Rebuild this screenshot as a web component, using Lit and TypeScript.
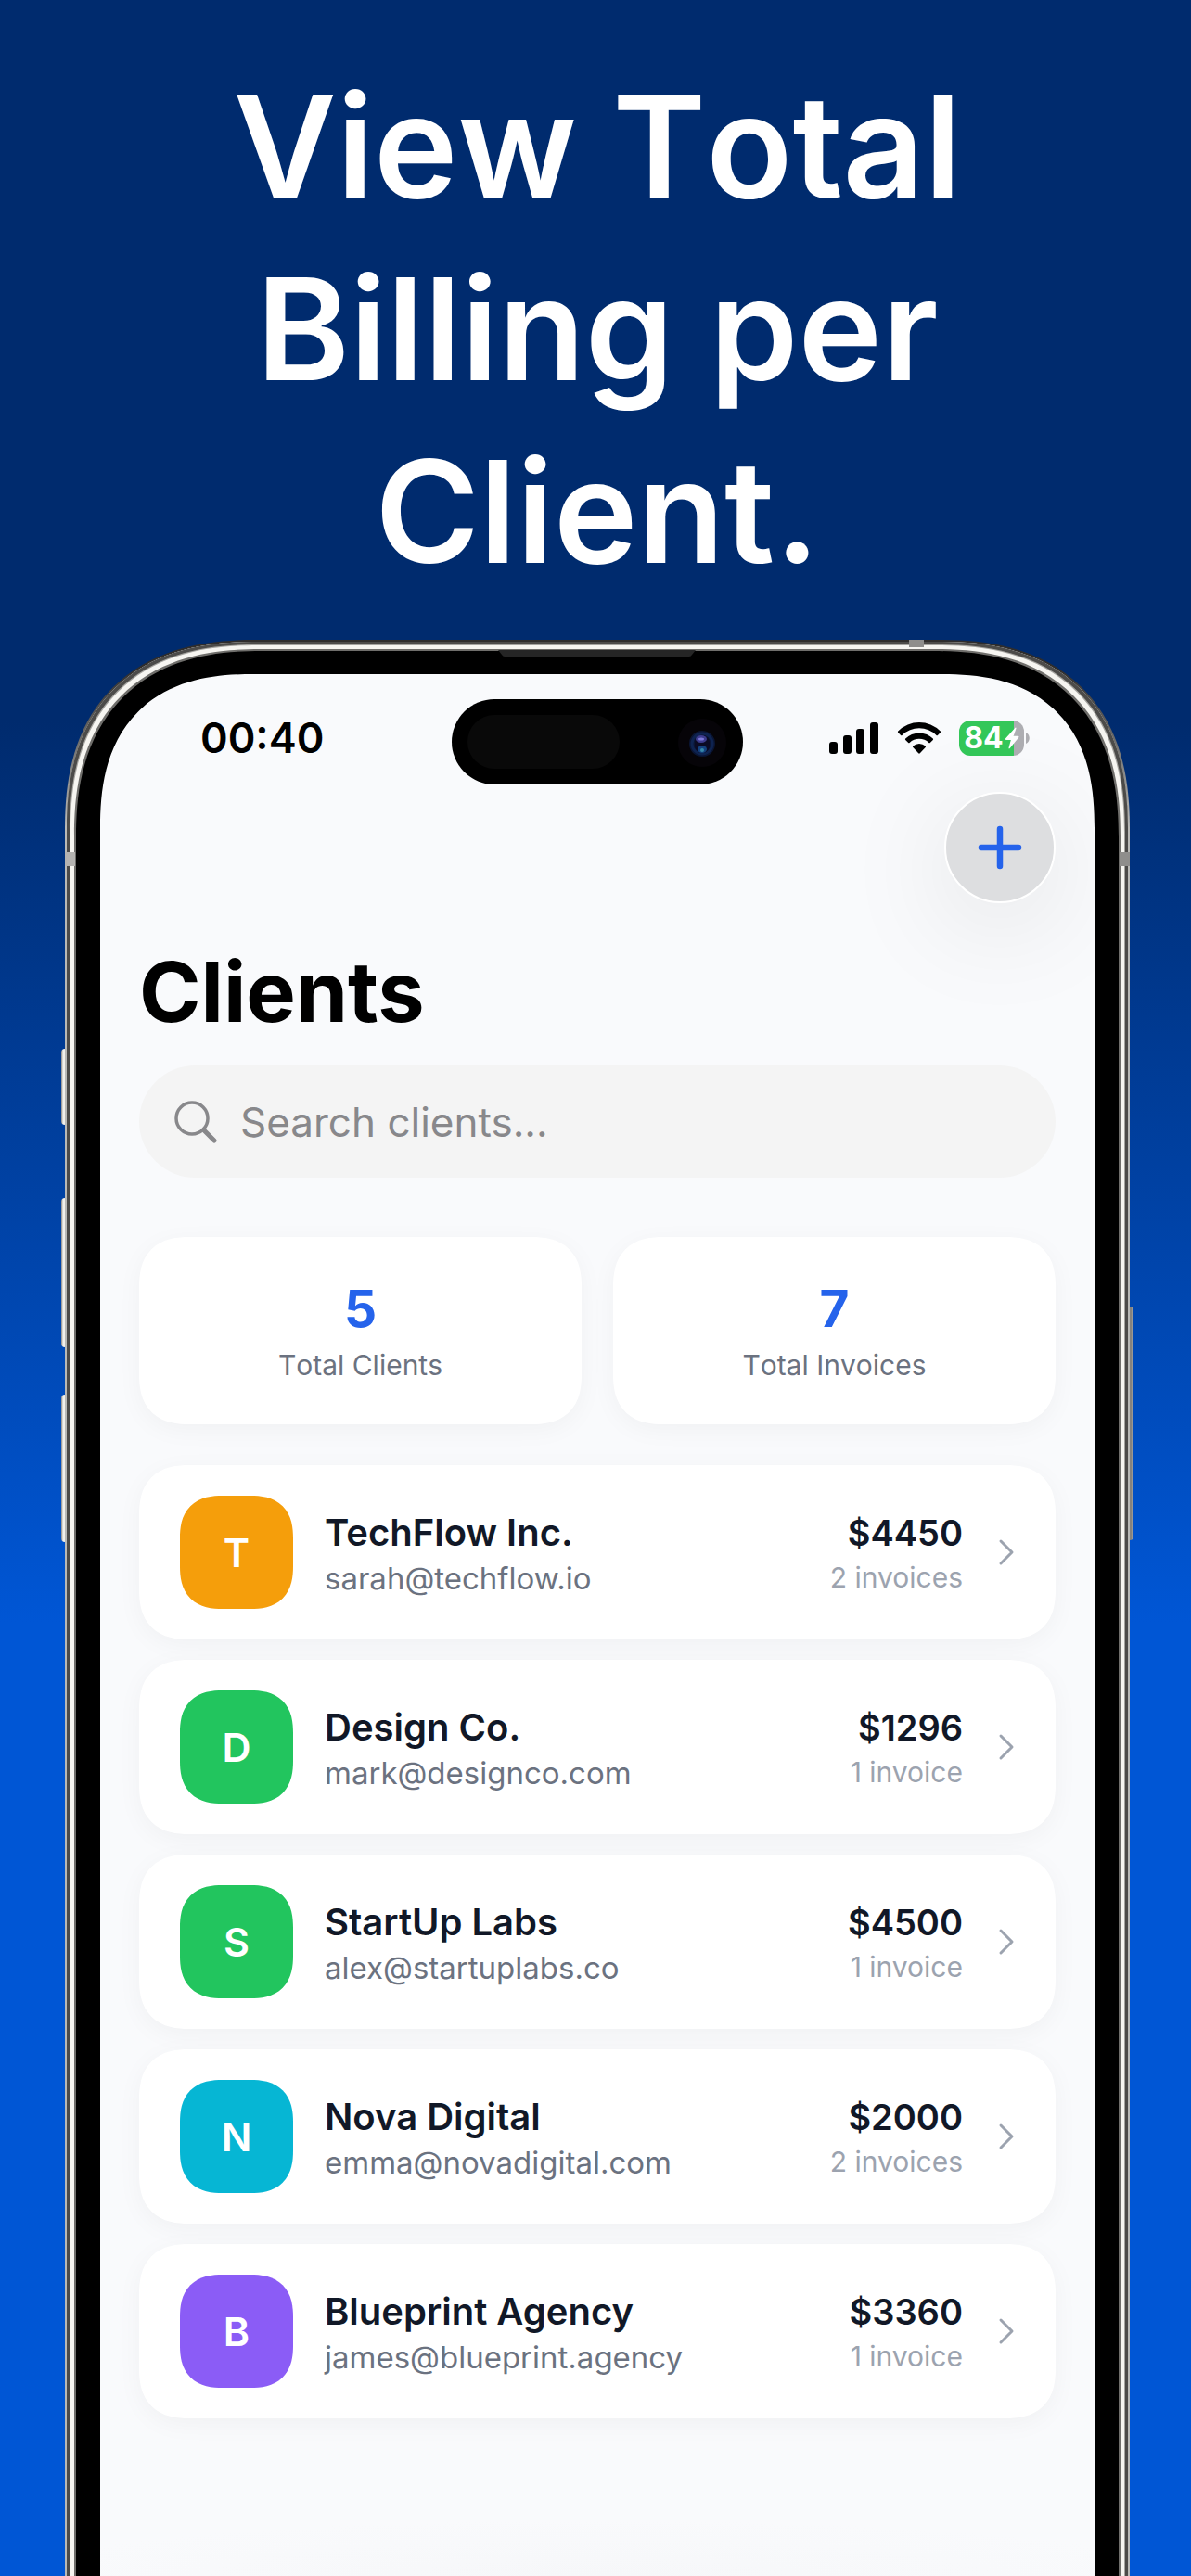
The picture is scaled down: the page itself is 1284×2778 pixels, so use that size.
import { LitElement, html, css, svg } from "lit";
import { customElement, property } from "lit/decorators.js";

interface Client {
  name: string;
  email: string;
  total: number;
  invoices: number;
  color: string;
}

const CLIENTS: Client[] = [
  { name: "TechFlow Inc.", email: "sarah@techflow.io", total: 4450, invoices: 2, color: "#f59e0b" },
  { name: "Design Co.", email: "mark@designco.com", total: 1296, invoices: 1, color: "#22c55e" },
  { name: "StartUp Labs", email: "alex@startuplabs.co", total: 4500, invoices: 1, color: "#22c55e" },
  { name: "Nova Digital", email: "emma@novadigital.com", total: 2000, invoices: 2, color: "#06b6d4" },
  { name: "Blueprint Agency", email: "james@blueprint.agency", total: 3360, invoices: 1, color: "#8b5cf6" },
];

const signalIcon = svg`<svg width="54" height="36" viewBox="0 0 54 36" aria-hidden="true">
  <rect x="0" y="22" width="9" height="13" rx="3"/>
  <rect x="15" y="15" width="9" height="20" rx="3"/>
  <rect x="29" y="8" width="9" height="27" rx="3"/>
  <rect x="44" y="1" width="9" height="34" rx="3"/>
</svg>`;

const wifiIcon = svg`<svg width="48" height="36" viewBox="0 0 48 36" aria-hidden="true">
  <path d="M1.2 10.6a32 32 0 0 1 45.6 0q.6.7 0 1.400l-2.900 2.900q-.7.7-1.400 0a26.500 26.500 0 0 0-37 0q-.7.7-1.400 0L1.200 12q-.6-.7 0-1.400z"/>
  <path d="M9.200 18.600a21 21 0 0 1 29.600 0q.7.700 0 1.400l-3 3q-.7.700-1.400 0a15 15 0 0 0-20.800 0q-.7.700-1.400 0l-3-3q-.7-.7 0-1.400z"/>
  <path d="M17.300 26.600a10 10 0 0 1 13.400 0q.8.700 0 1.500L24.800 34.300q-.8.800-1.600 0L17.300 28.100q-.8-.8 0-1.500z"/>
</svg>`;

const chevronIcon = svg`<svg width="18" height="30" viewBox="0 0 18 30" aria-hidden="true">
  <path d="M3 3l12 12L3 27" fill="none" stroke="#9ca3af" stroke-width="3" stroke-linecap="round" stroke-linejoin="round"/>
</svg>`;

@customElement("status-bar")
export class StatusBar extends LitElement {
  static styles = css`
    :host {
      display: grid;
      grid-template-columns: 1fr auto 1fr;
      align-items: start;
      padding-top: 27px;
    }
    .time, .icons { display: flex; align-items: center; height: 84px; }
    .time { padding-left: 108px; font-size: 45px; font-weight: 600; line-height: 56px; color: #000; }
    .icons { justify-content: flex-end; gap: 19px; padding-right: 70px; }
    svg { display: block; flex: none; }
    .island {
      display: flex;
      align-items: center;
      justify-content: space-between;
      width: 280px;
      height: 92px;
      padding: 0 17px;
      border-radius: 46px;
      background: #000;
    }
    .sensor { width: 164px; height: 58px; border-radius: 29px; background: #090909; }
    .battery { display: flex; align-items: center; gap: 2px; }
    .cell {
      display: flex;
      align-items: center;
      justify-content: center;
      gap: 1px;
      width: 70px;
      height: 38px;
      border-radius: 12px;
      background: linear-gradient(90deg, #34c759 84%, #aeaeb2 84%);
      color: #fff;
      font-size: 32px;
      line-height: 38px;
      font-weight: 700;
    }
  `;

  render() {
    return html`
      <div class="time">00:40</div>
      <div class="island">
        <div class="sensor"></div>
        <svg width="54" height="54" viewBox="0 0 54 54" aria-hidden="true">
          <circle cx="27" cy="28" r="26" fill="#060408"/>
          <circle cx="27" cy="29" r="14" fill="#0a1533"/>
          <circle cx="27" cy="29" r="11" fill="none" stroke="#0e2350" stroke-width="3"/>
          <rect x="19" y="20" width="16" height="19" rx="8" fill="#0b0b24"/>
          <ellipse cx="26" cy="24" rx="6" ry="4" fill="#3d3c8e"/>
          <ellipse cx="26" cy="24" rx="3" ry="1.500" fill="#7c78d8"/>
          <ellipse cx="27" cy="35" rx="5" ry="4" fill="#14427f"/>
          <circle cx="27" cy="36" r="2" fill="#3687a8"/>
        </svg>
      </div>
      <div class="icons">
        ${signalIcon} ${wifiIcon}
        <div class="battery">
          <div class="cell">
            <span>84</span>
            <svg width="16" height="24" viewBox="0 0 16 24" aria-hidden="true">
              <path d="M11.500.8L1 12.600q-.8 1.400.8 1.400h5L4.500 22.500q0 1.500 1.200.6L15.300 11.200q.7-1.400-.8-1.400H9.700L12.500 1.500q0-1.300-1-.7z" fill="#fff"/>
            </svg>
          </div>
          <svg width="4" height="12" viewBox="0 0 4 12" aria-hidden="true"><path d="M0 0c5 2 5 10 0 12z" fill="#aeaeb2"/></svg>
        </div>
      </div>
    `;
  }
}

@customElement("client-row")
export class ClientRow extends LitElement {
  @property({ attribute: false }) client!: Client;

  static styles = css`
    :host { display: block; }
    .row {
      display: flex;
      align-items: center;
      gap: 34px;
      padding: 33px 44px;
      border-radius: 42px;
      background: #fff;
      box-shadow: 0 6px 28px rgba(0, 0, 0, 0.04);
      text-decoration: none;
    }
    .avatar {
      display: flex;
      align-items: center;
      justify-content: center;
      flex: none;
      width: 122px;
      height: 122px;
      border-radius: 34px;
      color: #fff;
      font-size: 43px;
      font-weight: 600;
    }
    .who { flex: 1; min-width: 0; padding-top: 6px; }
    .sum { padding-top: 4px; text-align: right; }
    .name, .amount { color: #111827; font-weight: 600; line-height: 50px; }
    .name { font-size: 40px; }
    .amount { font-size: 38px; }
    .email { font-size: 33px; line-height: 48px; color: #6b7280; }
    .count { font-size: 30px; line-height: 46px; color: #9ca3af; }
    .tail { display: flex; align-items: center; gap: 38px; }
    svg { display: block; }
    @supports (corner-shape: squircle) {
      .row { border-radius: 54px; corner-shape: superellipse(1.3); }
      .avatar { border-radius: 46px; corner-shape: superellipse(1.3); }
    }
  `;

  render() {
    const c = this.client;
    return html`
      <a class="row" href="#client">
        <div class="avatar" style="background:${c.color}">${c.name[0]}</div>
        <div class="who">
          <div class="name">${c.name}</div>
          <div class="email">${c.email}</div>
        </div>
        <div class="tail">
          <div class="sum">
            <div class="amount">$${c.total}</div>
            <div class="count">${c.invoices} ${c.invoices === 1 ? "invoice" : "invoices"}</div>
          </div>
          ${chevronIcon}
        </div>
      </a>
    `;
  }
}

@customElement("app-root")
export class AppRoot extends LitElement {
  static styles = css`
    :host {
      display: flex;
      flex-direction: column;
      box-sizing: border-box;
      min-height: 100vh;
      padding: 59px 66px 0 70px;
      overflow: hidden;
      background: linear-gradient(180deg, #002b6e 28%, #0056d5 63%);
      font-family: Inter, "Liberation Sans", sans-serif;
    }
    h1, h2, p, ul { margin: 0; padding: 0; }
    .headline {
      padding-bottom: 40px;
      color: #fff;
      font-size: 153px;
      line-height: 197px;
      font-weight: 600;
      font-kerning: none;
      text-align: center;
    }
    /* The device runs past the lower edge, so its bottom rim is never visible. */
    .phone {
      position: relative;
      display: flex;
      flex: 1;
      margin-bottom: -16px;
      padding: 35px 36px 16px;
      border: 2px solid transparent;
      border-bottom: 0;
      border-radius: 176px 176px 0 0;
      background:
        linear-gradient(#000, #000) padding-box,
        linear-gradient(180deg, #2f2d2c 30px, #b9b9b6 200px) border-box;
      box-shadow:
        inset 0 0 0 3px #4c4b49,
        inset 0 0 0 4px #a5a4a0,
        inset 0 0 0 8px #f6f5f1,
        inset 0 0 0 10px #6f6e6b;
    }
    .key {
      position: absolute;
      width: 4px;
      background: linear-gradient(90deg, #85837f, #f1f0ec 50%);
      left: -6px;
      border-radius: 4px 0 0 4px;
    }
    .action { top: 439px; height: 82px; }
    .up { top: 600px; height: 161px; }
    .down { top: 812px; height: 159px; }
    .power {
      top: 717px;
      height: 252px;
      left: auto;
      right: -6px;
      border-radius: 0 4px 4px 0;
      background: linear-gradient(90deg, #85837f 50%, #d6d5d1);
    }
    .band { position: absolute; background: #b4b3b1; }
    .band-left { left: -2px; top: 227px; width: 11px; height: 15px; }
    .band-right { right: -2px; top: 227px; width: 11px; height: 15px; background: #8f8e8c; }
    .band-top { right: 220px; top: -2px; width: 16px; height: 8px; background: #8f8e8c; }
    .speaker { position: absolute; left: 465px; top: 9px; display: block; }
    .screen {
      flex: 1;
      min-width: 0;
      border-radius: 139px 139px 0 0;
      background: radial-gradient(ellipse 640px 60px at 50% 100%, #f6f7f9, #f9fafc);
      overflow: hidden;
    }
    .content { padding: 8px 42px 170px; }
    .toolbar { display: flex; justify-content: flex-end; }
    .add {
      display: flex;
      align-items: center;
      justify-content: center;
      width: 120px;
      height: 120px;
      padding: 0;
      border: 2px solid #fff;
      border-radius: 50%;
      background: #dddee0;
      box-shadow: 0 24px 120px rgba(0, 0, 0, 0.1);
      cursor: pointer;
    }
    .title { margin-top: 43px; color: #000; font-size: 90px; line-height: 106px; font-weight: 700; }
    .search {
      display: flex;
      align-items: center;
      gap: 25px;
      height: 121px;
      margin-top: 26px;
      padding: 0 38px;
      border-radius: 61px;
      background: #f4f4f4;
    }
    .search input {
      flex: 1;
      min-width: 0;
      padding: 0;
      border: 0;
      outline: 0;
      background: none;
      font: 400 44px/56px Inter, "Liberation Sans", sans-serif;
      color: #111827;
    }
    .search input::placeholder { color: #88888b; opacity: 1; }
    .stats { display: grid; grid-template-columns: 1fr 1fr; gap: 34px; margin-top: 64px; }
    .stat {
      padding: 42px 20px 38px;
      border-radius: 42px;
      background: #fff;
      box-shadow: 0 6px 28px rgba(0, 0, 0, 0.04);
      text-align: center;
    }
    .value { color: #2563eb; font-size: 55px; line-height: 70px; font-weight: 700; }
    .label { color: #6b7280; font-size: 30px; line-height: 52px; font-kerning: none; }
    .list { display: grid; gap: 22px; margin-top: 44px; list-style: none; }
    svg { display: block; flex: none; }
    @supports (corner-shape: squircle) {
      .phone { border-radius: 205px 205px 0 0; corner-shape: superellipse(1.26); }
      .screen { border-radius: 166px 166px 0 0; corner-shape: superellipse(1.3); }
      .stat { border-radius: 54px; corner-shape: superellipse(1.3); }
    }
  `;

  render() {
    return html`
      <h1 class="headline">View Total Billing per Client.</h1>
      <div class="phone">
        <i class="key action"></i><i class="key up"></i><i class="key down"></i><i class="key power"></i>
        <i class="band band-left"></i><i class="band band-right"></i><i class="band band-top"></i>
        <svg class="speaker" width="213" height="7" viewBox="0 0 213 7" aria-hidden="true">
          <path d="M0 0h213l-4 5q-1 2-3 2H7q-2 0-3-2z" fill="#252525"/>
        </svg>
        <main class="screen">
          <status-bar></status-bar>
          <div class="content">
            <div class="toolbar">
              <button class="add" type="button" aria-label="Add client">
                <svg width="48" height="48" viewBox="0 0 48 48" aria-hidden="true">
                  <path d="M24 4v40M4 24h40" fill="none" stroke="#2563eb" stroke-width="6.500" stroke-linecap="round"/>
                </svg>
              </button>
            </div>
            <h2 class="title">Clients</h2>
            <label class="search">
              <svg width="46" height="46" viewBox="0 0 46 46" fill="none" stroke="#88888b" aria-hidden="true">
                <circle cx="19" cy="19" r="17" stroke-width="3.500"/>
                <path d="M31.500 31.500L43 43" stroke-width="5" stroke-linecap="round"/>
              </svg>
              <input type="search" placeholder="Search clients..." aria-label="Search clients">
            </label>
            <div class="stats">
              <div class="stat"><p class="value">${CLIENTS.length}</p><p class="label">Total Clients</p></div>
              <div class="stat">
                <p class="value">${CLIENTS.reduce((n, c) => n + c.invoices, 0)}</p>
                <p class="label">Total Invoices</p>
              </div>
            </div>
            <ul class="list">
              ${CLIENTS.map((c) => html`<li><client-row .client=${c}></client-row></li>`)}
            </ul>
          </div>
        </main>
      </div>
    `;
  }
}
